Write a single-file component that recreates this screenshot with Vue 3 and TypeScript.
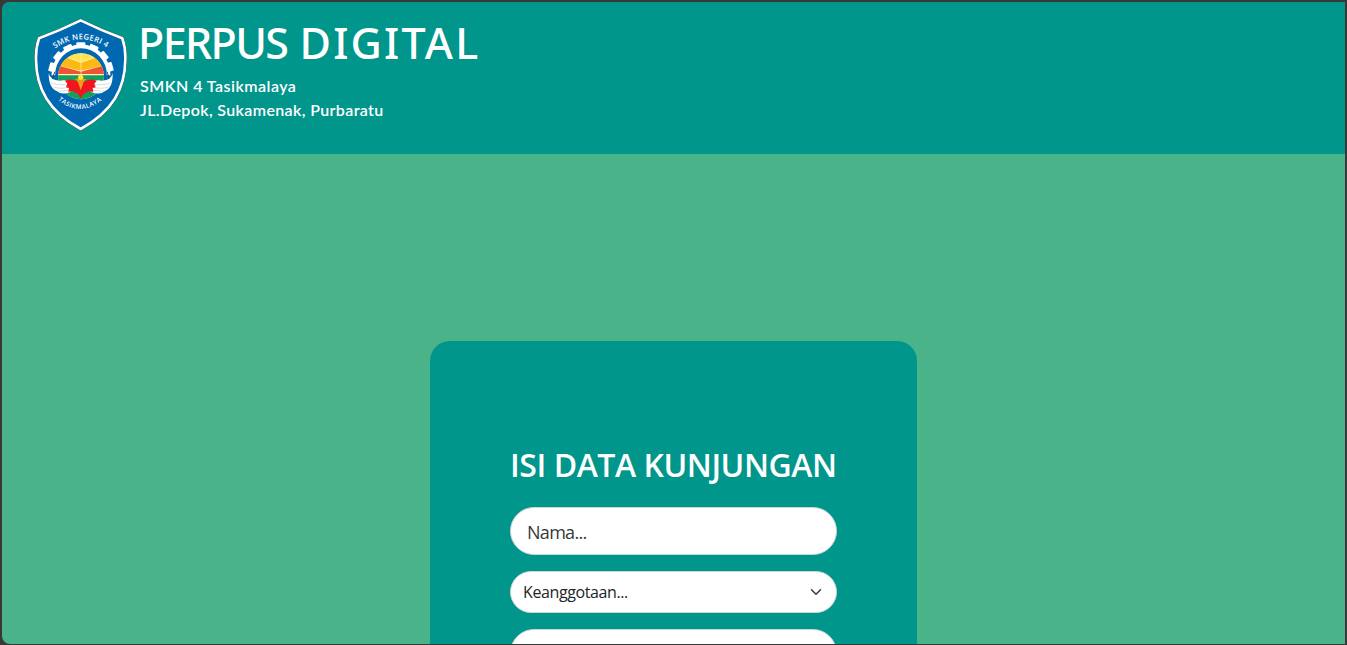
<script setup lang="ts">
import { ref } from 'vue'

const nama = ref<string>('')
const keanggotaan = ref<string>('')
const keperluan = ref<string>('')
const pilihan: string[] = ['Siswa', 'Guru', 'Umum']
const gear: number[] = [-74, -50, -25, 0, 25, 50, 74]
</script>

<template>
  <div class="window">
    <div class="page">
      <header class="header">
        <svg class="logo" viewBox="27 24 282 342" aria-label="SMK Negeri 4 Tasikmalaya">
          <defs>
            <path id="arc-top" d="M90 116 Q166 62 244 112" />
            <path id="arc-bottom" d="M99 270 Q164 325 235 268" />
            <clipPath id="disc"><circle cx="168" cy="199" r="69" /></clipPath>
          </defs>
          <path class="shield" d="M167 31 C134 47 92 66 42 85 C35 105 32 126 33 150 C34 235 70 304 167 357 C264 304 300 235 301 150 C302 126 299 105 292 85 C242 66 200 47 167 31 Z" />
          <g class="teeth">
            <rect v-for="a in gear" :key="a" x="154" y="97" width="27" height="15" rx="3" :transform="`rotate(${a} 168 196)`" />
          </g>
          <path class="ring" d="M85 196 A83 87 0 0 1 251 196" />
          <path class="rim" d="M90 185 Q80 205 78 222 M246 185 Q254 205 256 222" />
          <g clip-path="url(#disc)">
            <rect x="90" y="120" width="160" height="160" fill="#fff3c0" />
            <path d="M115 138 Q168 106 221 138 L168 156 Z" fill="#ffe451" />
            <path d="M96 134 L118 141 L168 158 L218 141 L240 134 V165 L168 182 L96 165 Z" fill="#fdb913" />
            <path d="M96 166 L168 185 L240 166 V192 H96 Z" fill="#f15230" />
            <path d="M96 196 H240 V280 H96 Z" fill="#13a05c" />
            <path d="M168 126 V198" class="bookline" />
          </g>
          <path class="wing" d="M71 190 Q76 211 104 212 Q124 208 145 218 L137 246 Q110 256 96 244 Q71 235 71 190 Z" />
          <path class="wing" d="M263 190 Q259 211 231 212 Q211 208 190 218 L198 246 Q225 256 239 244 Q264 235 263 190 Z" />
          <path class="feather" d="M78 218 Q94 226 125 224 M86 231 Q104 238 130 232 M98 243 Q112 245 136 239 M257 218 Q241 226 210 224 M249 231 Q231 238 205 232 M237 243 Q223 245 199 239" />
          <path fill="#f41420" d="M120 213 Q137 204 155 214 L167 222 L180 214 Q198 204 215 213 L208 221 L212 232 L203 234 L205 246 L190 243 L183 249 Q174 249 167 266 Q161 249 152 249 L145 243 L130 246 L132 234 L123 232 L127 221 Z" />
          <path fill="#f49b18" d="M150 207 Q166 204 186 207 Q175 213 174 222 L167 241 L161 222 Q160 213 150 207 Z" />
          <circle cx="167" cy="202" r="8" fill="#ffe62a" />
          <text class="logo-text top"><textPath href="#arc-top" textLength="166">SMK NEGERI 4</textPath></text>
          <text class="logo-text bottom"><textPath href="#arc-bottom" textLength="144">TASIKMALAYA</textPath></text>
        </svg>
        <div class="brand">
          <h1><span class="perpus">PERPUS</span> <span class="digital">DIGITAL</span></h1>
          <p class="school">SMKN 4 Tasikmalaya</p>
          <p class="address">JL.Depok, Sukamenak, Purbaratu</p>
        </div>
      </header>

      <main class="content">
        <form class="card" @submit.prevent>
          <h2>ISI DATA KUNJUNGAN</h2>
          <input v-model="nama" class="field nama" type="text" placeholder="Nama..." />
          <div class="select-wrap">
            <select v-model="keanggotaan" class="field select">
              <option value="">Keanggotaan...</option>
              <option v-for="p in pilihan" :key="p" :value="p">{{ p }}</option>
            </select>
            <svg class="chevron" viewBox="0 0 16 16"><path d="m2 5 6 6 6-6" /></svg>
          </div>
          <input v-model="keperluan" class="field nama" type="text" />
        </form>
      </main>
    </div>
  </div>
</template>

<style>
html, body { margin: 0; background: #383838; overflow: hidden; }
</style>

<style scoped>
.window {
  box-sizing: border-box;
  width: 100%;
  height: 645px;
  padding: 2px 2px 1px;
  background: #383838;
  font-family: "Segoe UI", "Open Sans", sans-serif;
}
.page {
  display: flex;
  flex-direction: column;
  height: 642px;
  overflow: hidden;
  border-radius: 8px 0 0 8px;
  background: #4bb38a;
}
.header {
  display: flex;
  flex: none;
  box-sizing: border-box;
  height: 152px;
  padding: 16px 32px;
  background: #00968c;
  color: #fff;
}
.logo { flex: none; width: 94px; height: 114px; }
.shield { fill: #0067b1; stroke: #fff; stroke-width: 8; stroke-linejoin: round; filter: drop-shadow(0 0 2px #222) drop-shadow(0 0 1px #333); }
.teeth { fill: #fff; }
.ring { fill: none; stroke: #fff; stroke-width: 11; }
.rim { fill: none; stroke: #253f58; stroke-width: 3; }
.bookline { fill: none; stroke: #fff3c0; stroke-width: 2; }
.wing { fill: #fff; }
.feather { fill: none; stroke: #c9c5cb; stroke-width: 2; }
.logo-text { fill: #fff; font-family: "Open Sans", sans-serif; font-weight: 600; }
.top { font-size: 23px; }
.bottom { font-size: 19px; }
.brand { padding-left: 12px; font-family: "Comic Sans MS", "Lato", sans-serif; white-space: nowrap; }
h1 { margin: 1px 0 7px -2px; font-family: "Comic Sans MS", "Noto Sans", sans-serif; font-size: 43px; font-weight: 500; line-height: 48px; }
.perpus { margin-right: 1px; letter-spacing: -1.6px; }
.digital { letter-spacing: 2.2px; }
p { margin: 0; font-size: 16px; font-weight: 600; line-height: 24px; }
.school { letter-spacing: 0.47px; }
.address { letter-spacing: 0.37px; }
.content { display: flex; flex: none; justify-content: center; padding-top: 187px; }
.card {
  box-sizing: border-box;
  display: flex;
  flex-direction: column;
  width: 487px;
  height: 520px;
  padding: 104px 80px;
  border-radius: 20px;
  background: #00968c;
}
h2 { margin: 0 0 23px; font-size: 32px; font-weight: 600; line-height: 39px; letter-spacing: -0.45px; color: #fff; white-space: nowrap; }
.field {
  box-sizing: border-box;
  display: block;
  width: 100%;
  margin: 0;
  border: 1px solid #ced4da;
  background: #fff;
  color: #212529;
  font-family: inherit;
  outline: none;
}
.nama { flex: none; height: 48px; padding: 2px 16px 0; border-radius: 24px; font-size: 18px; letter-spacing: -0.7px; }
.nama::placeholder { color: #36393c; opacity: 1; }
.select-wrap { position: relative; margin: 16px 0; }
.select { height: 42px; padding: 0 36px 0 12px; border-radius: 22px; font-size: 16px; letter-spacing: -0.4px; appearance: none; }
.chevron { position: absolute; top: 15px; right: 15px; width: 12px; height: 12px; fill: none; stroke: #343a40; stroke-width: 2; stroke-linecap: round; stroke-linejoin: round; pointer-events: none; }
</style>
